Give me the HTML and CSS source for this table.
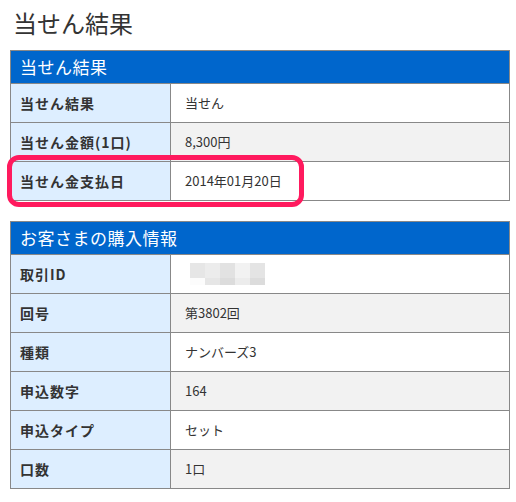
FILE: index.html
```html
<!DOCTYPE html>
<html lang="ja">
<head>
<meta charset="utf-8">
<link rel="stylesheet" href="styles.css">
</head>
<body>
<div class="page">
  <h1 class="title">当せん結果</h1>
  <div class="tbl">
    <div class="head">当せん結果</div>
    <div class="row"><div class="lab">当せん結果</div><div class="val">当せん</div></div>
    <div class="row alt"><div class="lab">当せん金額(1口)</div><div class="val">8,300円</div></div>
    <div class="row"><div class="lab">当せん金支払日</div><div class="val">2014年01月20日</div></div>
  </div>
  <div class="tbl second">
    <div class="head">お客さまの購入情報</div>
    <div class="row"><div class="lab">取引ID</div><div class="val">
      <div class="blur">
        <span class="b1"></span><span class="b2"></span><span class="b3"></span><span class="b4"></span><span class="b5"></span>
        <span class="c1"></span><span class="c2"></span><span class="c3"></span><span class="c4"></span><span class="c5"></span>
      </div>
    </div></div>
    <div class="row alt"><div class="lab">回号</div><div class="val">第3802回</div></div>
    <div class="row"><div class="lab">種類</div><div class="val">ナンバーズ3</div></div>
    <div class="row alt"><div class="lab">申込数字</div><div class="val">164</div></div>
    <div class="row"><div class="lab">申込タイプ</div><div class="val">セット</div></div>
    <div class="row alt"><div class="lab">口数</div><div class="val">1口</div></div>
  </div>
  <div class="highlight"></div>
</div>
</body>
</html>
```
FILE: styles.css
```css
* { box-sizing: border-box; }
body {
  margin: 0;
  background: #fff;
  font-family: "Noto Sans CJK JP", "Noto Sans", sans-serif;
  color: #333;
}
.page {
  position: relative;
  width: 516px;
  height: 502px;
  padding: 0 6px 0 10px;
}
.title {
  margin: 0;
  height: 50px;
  padding: 6px 0 0 3px;
  font-size: 24px;
  font-weight: normal;
  line-height: 34px;
  color: #333;
}
.tbl {
  width: 500px;
  border: 1px solid #888;
}
.second { margin-top: 20px; }
.head {
  height: 32px;
  background: #0066cc;
  color: #fff;
  font-size: 17px;
  line-height: 32px;
  padding-left: 9px;
  letter-spacing: 0.5px;
}
.row {
  display: flex;
  height: 39px;
  border-top: 1px solid #888;
  background: #fff;
}
.row.alt { background: #f2f2f2; }
.lab {
  width: 160px;
  flex: none;
  background: #ddeeff;
  border-right: 1px solid #888;
  font-weight: bold;
  font-size: 14px;
  line-height: 38px;
  padding-left: 9px;
  letter-spacing: 1px;
}
.val {
  flex: 1;
  font-size: 13px;
  line-height: 38px;
  padding-left: 14px;
}
.blur {
  display: grid;
  grid-template-columns: repeat(5, 15px);
  grid-template-rows: 15px 7px;
  margin-top: 8px;
  margin-left: 5px;
}
.blur span { display: block; }
.b1 { background: #e6e6e6; }
.b2 { background: #ececec; }
.b3 { background: #e2e2e2; }
.b4 { background: #f2f2f2; }
.b5 { background: #e4e4e4; }
.c1 { background: #fcfcfc; }
.c2 { background: #e6e6e6; }
.c3 { background: #dcdcdc; }
.c4 { background: #ececec; }
.c5 { background: #dcdcdc; }
.highlight {
  position: absolute;
  left: 7px;
  top: 155px;
  width: 297px;
  height: 52px;
  border: 5px solid #ff1a5e;
  border-radius: 12px;
}
```
